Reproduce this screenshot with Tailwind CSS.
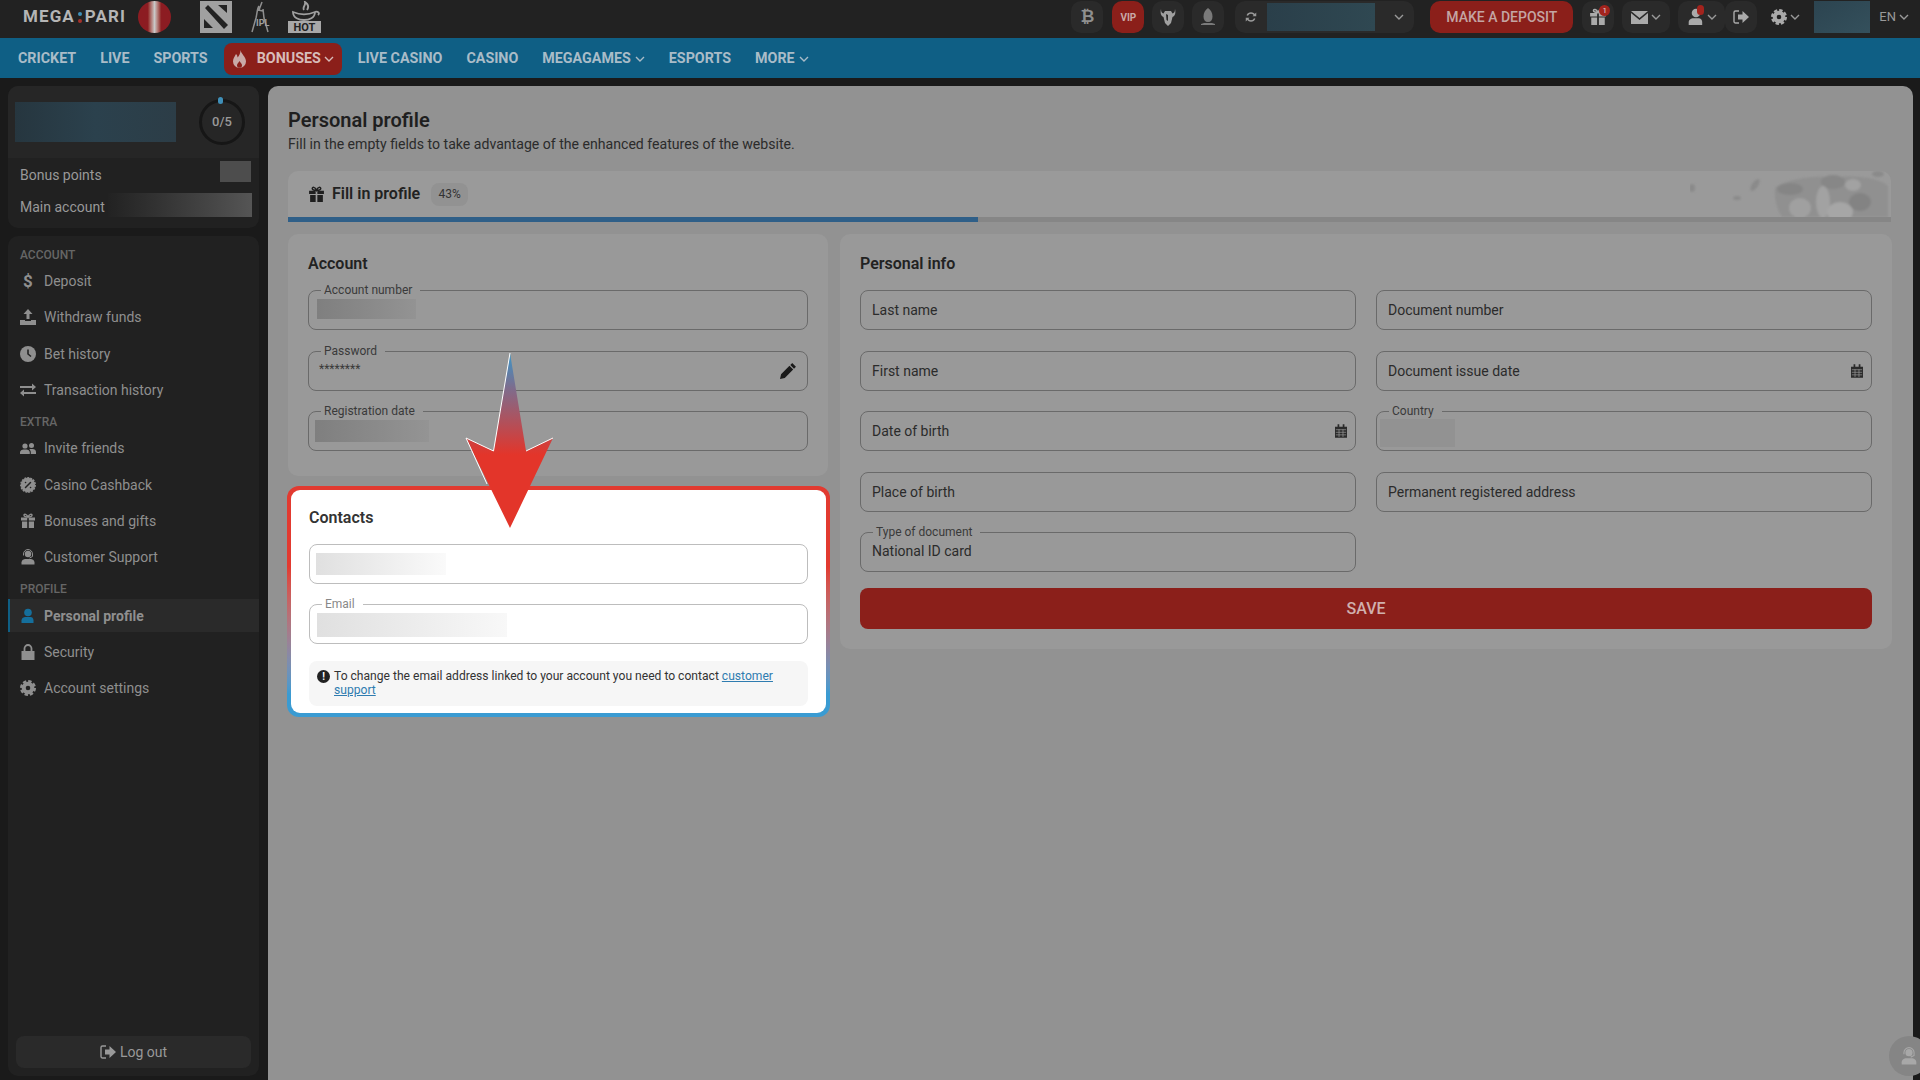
<!DOCTYPE html>
<html lang="en">
  <head>
    <meta charset="UTF-8" />
    <meta name="viewport" content="width=device-width, initial-scale=1.0" />
    <title>Personal profile</title>
    <script src="https://cdn.jsdelivr.net/npm/@tailwindcss/browser@4"></script>
  </head>
  <body class="relative h-[1080px] w-[1920px] overflow-hidden bg-[#1a1a1a] font-['Roboto',sans-serif]">
    <svg class="hidden">
      <symbol id="chev" viewBox="0 0 10 6"><path d="M1 1l4 4 4-4" fill="none" stroke="currentColor" stroke-width="1.4" /></symbol>
      <symbol id="gift" viewBox="0 0 16 16"><path fill="currentColor" d="M1 4.500h6.200v3H1zM8.800 4.500H15v3H8.800zM2 8.500h5.200V15H2zM8.800 8.500H14V15H8.800z" /><path fill="none" stroke="currentColor" stroke-width="1.400" d="M8 4C6 4 4 3.600 4 2.300 4 .8 6.600.6 8 4c1.400-3.400 4-3.200 4-1.700C12 3.600 10 4 8 4z" /></symbol>
      <symbol id="person" viewBox="0 0 16 16"><circle cx="8" cy="4.500" r="3.800" fill="currentColor" /><path fill="currentColor" d="M1.500 15v-2.500C1.500 10 4 9 5.500 9h5c1.500 0 3 1 3 3.500V15z" /></symbol>
      <symbol id="agent" viewBox="0 0 16 16"><circle cx="8" cy="5" r="3.200" fill="currentColor" /><path fill="none" stroke="currentColor" stroke-width="1" d="M3.500 6.500V5a4.500 4.500 0 0 1 9 0v2.500L9.500 9" /><path fill="currentColor" d="M1.500 15.500v-2C1.500 11 4 10 5.500 10h5c1.500 0 4 1 4 3.500v2z" /></symbol>
      <symbol id="friends" viewBox="0 0 16 16"><circle cx="5" cy="6" r="2.600" fill="currentColor" /><circle cx="11.500" cy="5.500" r="2.500" fill="currentColor" /><path fill="currentColor" d="M0 14v-1.500C0 10.500 2 9.500 3.500 9.500h3C8 9.500 9.800 10.500 9.800 12.500V14zM10.800 14v-1.500c0-1.200-.5-2.400-1.500-3.200.5-.2 1-.3 1.500-.3h1.700C14.500 9 16 10 16 12v2z" /></symbol>
      <symbol id="clock" viewBox="0 0 16 16"><circle cx="8" cy="8" r="8" fill="currentColor" /><path d="M8 3.500V8l3 2.500" fill="none" stroke="#222" stroke-width="1.600" /></symbol>
      <symbol id="upload" viewBox="0 0 16 16"><path fill="currentColor" d="M8 0l4.500 5H9.500v5h-3V5H3.500zM0 11h5v1h6v-1h5v5H0z" /></symbol>
      <symbol id="transfer" viewBox="0 0 16 16"><path fill="currentColor" d="M0 4h12V1.500L16 5l-4 3.500V6H0zM16 10H4V7.500L0 11l4 3.500V12h12z" /></symbol>
      <symbol id="cashback" viewBox="0 0 16 16"><circle cx="8" cy="8" r="7.200" fill="currentColor" stroke="currentColor" stroke-width="1.500" stroke-dasharray="2 1" /><path d="M5.500 10.500l5-5M5.500 5.500h.1M10.500 10.500h.1" stroke="#222" stroke-width="1.500" stroke-linecap="round" /></symbol>
      <symbol id="lock" viewBox="0 0 16 16"><path fill="currentColor" d="M1.500 7h13v9h-13z" /><path d="M4.500 7V4.500a3.500 3.500 0 0 1 7 0V7" fill="none" stroke="currentColor" stroke-width="1.800" /></symbol>
      <symbol id="gear" viewBox="0 0 16 16"><circle cx="8" cy="8" r="4.300" fill="none" stroke="currentColor" stroke-width="4" /><circle cx="8" cy="8" r="6.800" fill="none" stroke="currentColor" stroke-width="2.400" stroke-dasharray="3.400 1.940" /></symbol>
      <symbol id="calendar" viewBox="0 0 14 16"><path fill="currentColor" d="M0 3h14v13H0zM3 0h2v4H3zM9 0h2v4H9z" /><path stroke="#999" stroke-width=".8" d="M1 6.500h12M1 9.500h12M1 12.500h12M4.700 6v9M9.300 6v9" /></symbol>
      <symbol id="logout" viewBox="0 0 16 16"><path fill="none" stroke="currentColor" stroke-width="1.400" d="M6 2H2.500A1.500 1.500 0 0 0 1 3.500v9A1.500 1.500 0 0 0 2.500 14H6" /><path fill="currentColor" d="M5 5.500h4.500V2L16 8l-6.500 6v-3.500H5z" /></symbol>
      <symbol id="pencil" viewBox="0 0 16 16"><path fill="currentColor" d="M11.500 1l3.500 3.500-1.800 1.800-3.500-3.500zM8.900 3.600l3.500 3.500L4.500 15 0 16l1-4.500z" /></symbol>
    </svg>

    <!-- top bar -->
    <header class="flex h-[38px] items-start bg-[#222] pt-px">
      <div class="ml-[23px] flex h-8 w-[103px] items-center text-[17px] font-bold tracking-[1.1px] whitespace-nowrap text-[#b5b5b5]">
        MEGA
        <span class="mx-[3px] flex flex-col gap-[3px]">
          <span class="h-[4px] w-[4px] rounded-full bg-[#3f8fb8]"></span>
          <span class="h-[4px] w-[4px] rounded-full bg-[#a3312b]"></span>
        </span>
        PARI
      </div>
      <div class="ml-[12px] h-8 w-[33px] rounded-[50%] bg-linear-to-r from-[#8c1c22] from-30% via-[#c8c8c8] via-50% to-[#8c1c22] to-70%"></div>
      <svg class="ml-[29px] h-8 w-8" viewBox="0 0 32 32">
        <rect width="32" height="32" fill="#a0a0a0" />
        <path fill="#222" d="M5 7l3-3 20 20-4 4zM18 4h9v8zM4 18l9 9H4z" />
      </svg>
      <svg class="ml-[18px] h-8 w-5" viewBox="0 0 20 32">
        <path fill="none" stroke="#8f8f8f" stroke-width="1.500" d="M12 1L9 9M9 5c-2 3-2 8-3 12L2 31M13 8l1 9 4 14M8 9l5 1" />
        <text x="6" y="25" font-size="9" font-weight="700" fill="#a0a0a0">IPL</text>
      </svg>
      <svg class="ml-[18px] h-8 w-[33px]" viewBox="0 0 33 32">
        <path fill="none" stroke="#a0a0a0" stroke-width="1.800" d="M5 11c0 6 6 8 11 8s11-2 11-8c-7 3-15 3-22 0zM27 11c3-1 5 1 3 3M16 9c-2-3 2-4 1-8 3 2 4 5 2 8" />
        <rect y="20" width="33" height="12" fill="#a8a8a8" />
        <text x="16.500" y="30" text-anchor="middle" font-size="11" font-weight="700" fill="#222">HOT</text>
      </svg>

      <div class="ml-auto flex items-start pr-[6px]">
        <div class="flex h-8 w-8 items-center justify-center rounded-[10px] bg-[#2a2a2a] text-[17px] font-bold text-[#8f8f8f]">₿</div>
        <div class="ml-[9px] flex h-8 w-8 items-center justify-center rounded-[10px] bg-[#8b1f1a] text-[10px] font-bold text-[#c9a9a7]">VIP</div>
        <div class="ml-2 flex h-8 w-8 items-center justify-center rounded-[10px] bg-[#2a2a2a]">
          <svg class="h-[18px] w-[16px] text-[#a0a0a0]" viewBox="0 0 16 18"><path fill="currentColor" d="M1 1c0 3 1 4 2.500 4.500L5 3h6l1.500 2.500C14 5 15 4 15 1c1 4 0 7-2.500 8L11 15l-3 3-3-3-1.500-6C1 8 0 5 1 1z" /><path fill="#2a2a2a" d="M6 6l2 1v6L6.500 12z" /></svg>
        </div>
        <div class="ml-2 flex h-8 w-8 items-center justify-center rounded-[10px] bg-[#2a2a2a]">
          <svg class="h-[18px] w-[16px] text-[#7a7a7a]" viewBox="0 0 16 18"><path fill="currentColor" d="M8 0c3 2 4.500 5 4.500 8.500S11 14 8 14s-4.500-2-4.500-5.500S5 2 8 0zM1 16l3-1h8l3 1v1H1z" /></svg>
        </div>
        <div class="ml-[11px] flex h-8 w-[179px] items-center rounded-[10px] bg-[#2a2a2a]">
          <svg class="ml-[10px] h-[12px] w-[12px] text-[#999]" viewBox="0 0 16 16"><path fill="none" stroke="currentColor" stroke-width="2" d="M13 6A5.500 5.500 0 0 0 3 6M3 10a5.500 5.500 0 0 0 10 0" /><path fill="currentColor" d="M15 2v5h-5zM1 14V9h5z" /></svg>
          <div class="ml-[10px] h-[28px] w-[108px] bg-linear-to-r from-[#2a3f4a] to-[#2f4852]"></div>
          <svg class="ml-[19px] h-[6px] w-[10px] text-[#999]"><use href="#chev" /></svg>
        </div>
        <div class="ml-4 flex h-8 w-[143px] items-center justify-center rounded-[10px] bg-[#8b1f1a] text-[14px] font-medium text-[#c4a5a3]">MAKE A DEPOSIT</div>
        <div class="relative ml-[9px] flex h-8 w-8 items-center justify-center rounded-[10px] bg-[#2a2a2a]">
          <svg class="h-[18px] w-[18px] text-[#aaa]"><use href="#gift" /></svg>
          <span class="absolute top-[4px] right-[4px] flex h-[11px] w-[11px] items-center justify-center rounded-full bg-[#a3231d] text-[8px] text-[#ddd]">1</span>
        </div>
        <div class="ml-2 flex h-8 w-[48px] items-center justify-center gap-[3px] rounded-[10px] bg-[#2a2a2a]">
          <svg class="h-[13px] w-[17px] text-[#aaa]" viewBox="0 0 17 13"><path fill="currentColor" d="M0 0h17L8.500 7zM0 2l8.500 7L17 2v11H0z" /></svg>
          <svg class="h-[6px] w-[10px] text-[#999]"><use href="#chev" /></svg>
        </div>
        <div class="relative ml-2 flex h-8 w-[47px] items-center justify-center gap-[2px] rounded-[10px] bg-[#2a2a2a]">
          <svg class="h-[18px] w-[18px] text-[#aaa]"><use href="#person" /></svg>
          <svg class="h-[6px] w-[10px] text-[#999]"><use href="#chev" /></svg>
          <span class="absolute top-[4px] left-[19px] h-[10px] w-[7px] rounded-full bg-[#a3231d]"></span>
        </div>
        <div class="flex h-8 w-8 items-center justify-center rounded-[10px] bg-[#2a2a2a]">
          <svg class="h-4 w-4 text-[#aaa]"><use href="#logout" /></svg>
        </div>
        <div class="ml-2 flex h-8 w-[40px] items-center justify-center gap-[3px]">
          <svg class="h-[16px] w-[16px] text-[#aaa]"><use href="#gear" /></svg>
          <svg class="h-[6px] w-[10px] text-[#999]"><use href="#chev" /></svg>
        </div>
        <div class="ml-[9px] h-8 w-[56px] bg-linear-to-br from-[#2c4450] to-[#34505c]"></div>
        <div class="ml-[9px] flex h-8 items-center gap-[3px] pr-[5px] text-[13px] text-[#999]">
          EN
          <svg class="h-[6px] w-[10px] text-[#999]"><use href="#chev" /></svg>
        </div>
      </div>
    </header>

    <!-- main nav -->
    <nav class="flex h-10 items-center gap-6 bg-[#0f5f85] pt-px pl-[18px] text-[14.300px] font-bold text-[#a9bcc8]">
      <span>CRICKET</span>
      <span>LIVE</span>
      <span>SPORTS</span>
      <span class="-mx-2 flex h-8 w-[118px] items-center rounded-lg bg-[#8b1f1a] pl-2 text-[#d8bcba]">
        <svg class="h-[18px] w-[15px] text-[#c9aaa8]" viewBox="0 0 15 18"><path fill="currentColor" d="M8.500 0c.5 4 5.500 6.500 5.500 11.500A6.500 6.500 0 0 1 7.500 18 6.500 6.500 0 0 1 1 11.500c0-3 1.500-4.500 3-7.500 1 1 1.500 2 1.500 3.500C7 6 8.500 3.500 8.500 0zM7.500 11c-1 2-2.500 2.800-2.500 4.200a2.500 2.500 0 0 0 5 0c0-1.400-1.500-2.200-2.500-4.200z" fill-rule="evenodd" /></svg>
        <span class="ml-[10px]">BONUSES</span>
        <svg class="ml-[3px] h-[6px] w-[10px]"><use href="#chev" /></svg>
      </span>
      <span>LIVE CASINO</span>
      <span>CASINO</span>
      <span class="flex items-center gap-[4px]">MEGAGAMES<svg class="h-[6px] w-[10px]"><use href="#chev" /></svg></span>
      <span>ESPORTS</span>
      <span class="flex items-center gap-[4px]">MORE<svg class="h-[6px] w-[10px]"><use href="#chev" /></svg></span>
    </nav>

    <div class="flex h-[1002px] pt-2 pl-2">
      <!-- sidebar -->
      <aside class="flex h-[990px] w-[251px] flex-col">
        <div class="h-[142px] overflow-hidden rounded-[10px] bg-[#212121]">
          <div class="flex h-[72px] items-center bg-[#262626] pl-[7px]">
            <div class="h-10 w-[161px] bg-linear-to-r from-[#26363f] via-[#2b414d] to-[#2c3d47]"></div>
            <div class="relative ml-[23px] flex h-[46px] w-[46px] items-center justify-center rounded-full border-[3px] border-[#161616] text-[13px] font-medium text-[#999]">
              0/5
              <span class="absolute -top-[5px] left-[16px] h-[7px] w-[5px] rounded-full bg-[#3f8fb8]"></span>
            </div>
          </div>
          <div class="relative flex h-[33px] items-center pl-[12px] text-sm text-[#999]">
            Bonus points
            <span class="absolute top-[3px] right-[8px] h-[21px] w-[31px] bg-[#4d4d4d]"></span>
          </div>
          <div class="relative flex h-[31px] items-center pl-[12px] text-sm text-[#999]">
            Main account
            <span class="absolute top-[2px] right-[7px] h-6 w-[144px] bg-linear-to-r from-[#222] to-[#555]"></span>
          </div>
        </div>

        <div class="mt-2 flex flex-1 flex-col rounded-[10px] bg-[#212121] pt-[5px] pb-2 text-sm text-[#8f8f8f]">
          <div class="h-[22px] pt-[6px] pl-3 text-xs leading-4 font-medium text-[#666]">ACCOUNT</div>
          <a class="flex h-[36.300px] items-center pl-3"><span class="w-4 text-center text-[17px] font-bold">$</span><span class="ml-2">Deposit</span></a>
          <a class="flex h-[36.300px] items-center pl-3"><svg class="h-4 w-4"><use href="#upload" /></svg><span class="ml-2">Withdraw funds</span></a>
          <a class="flex h-[36.300px] items-center pl-3"><svg class="h-4 w-4"><use href="#clock" /></svg><span class="ml-2">Bet history</span></a>
          <a class="flex h-[36.300px] items-center pl-3"><svg class="h-4 w-4"><use href="#transfer" /></svg><span class="ml-2">Transaction history</span></a>
          <div class="h-[22px] pt-[6px] pl-3 text-xs leading-4 font-medium text-[#666]">EXTRA</div>
          <a class="flex h-[36.300px] items-center pl-3"><svg class="h-4 w-4"><use href="#friends" /></svg><span class="ml-2">Invite friends</span></a>
          <a class="flex h-[36.300px] items-center pl-3"><svg class="h-4 w-4"><use href="#cashback" /></svg><span class="ml-2">Casino Cashback</span></a>
          <a class="flex h-[36.300px] items-center pl-3"><svg class="h-4 w-4"><use href="#gift" /></svg><span class="ml-2">Bonuses and gifts</span></a>
          <a class="flex h-[36.300px] items-center pl-3"><svg class="h-4 w-4"><use href="#agent" /></svg><span class="ml-2">Customer Support</span></a>
          <div class="h-[22px] pt-[6px] pl-3 text-xs leading-4 font-medium text-[#666]">PROFILE</div>
          <a class="my-[1.650px] flex h-[33px] items-center border-l-2 border-[#0f5f85] bg-[#2a2a2a] pl-[10px] font-bold"><svg class="h-4 w-4 text-[#156f9c]"><use href="#person" /></svg><span class="ml-2">Personal profile</span></a>
          <a class="flex h-[36.300px] items-center pl-3"><svg class="h-4 w-4"><use href="#lock" /></svg><span class="ml-2">Security</span></a>
          <a class="flex h-[36.300px] items-center pl-3"><svg class="h-4 w-4"><use href="#gear" /></svg><span class="ml-2">Account settings</span></a>
          <button class="mx-2 mt-auto flex h-8 items-center justify-center gap-1 rounded-lg bg-[#2a2a2a] text-[#999]">
            <svg class="h-4 w-4"><use href="#logout" /></svg>
            Log out
          </button>
        </div>
      </aside>

      <!-- content -->
      <main class="relative ml-[9px] h-[994px] w-[1645px] rounded-t-[10px] bg-[#929292] px-5 pt-5 text-[#222]">
        <h1 class="text-xl leading-7 font-semibold text-[#1f1f1f]">Personal profile</h1>
        <p class="text-[14.100px] leading-5 text-[#2b2b2b]">Fill in the empty fields to take advantage of the enhanced features of the website.</p>

        <div class="relative mt-[17px] h-[51px] w-[1603px] overflow-hidden rounded-t-[10px] bg-[#9a9a9a]">
          <div class="flex h-[46px] items-center pl-5">
            <svg class="h-[17px] w-[17px] text-[#1f1f1f]"><use href="#gift" /></svg>
            <span class="ml-[7px] text-base font-semibold">Fill in profile</span>
            <span class="ml-[11px] flex h-[23px] w-[37px] items-center justify-center rounded-lg bg-[#929292] text-xs text-[#333]">43%</span>
          </div>
          <div class="h-[5px] bg-[#868686]"><div class="h-[5px] w-[690px] bg-[#2f5f88]"></div></div>
          <svg class="absolute top-0 right-0 h-[46px] w-[201px]" viewBox="0 0 201 46">
            <defs><filter id="soft"><feGaussianBlur stdDeviation="1" /></filter></defs>
            <g filter="url(#soft)">
              <g fill="#8a8a8a">
                <ellipse cx="2" cy="17" rx="3" ry="4" />
                <ellipse cx="47" cy="27" rx="4" ry="2" />
                <ellipse cx="65" cy="14" rx="3" ry="7" transform="rotate(35 65 14)" />
                <ellipse cx="188" cy="3" rx="6" ry="3" />
              </g>
              <path fill="#909090" d="M85 17c10-8 40-14 58-10 20-4 48 0 55 8v31H92c-6-10-8-20-7-29z" />
              <ellipse cx="143" cy="11" rx="12" ry="7" fill="#878787" />
              <ellipse cx="100" cy="18" rx="13" ry="6" fill="#858585" />
              <ellipse cx="163" cy="14" rx="8" ry="6" fill="#a2a2a2" />
              <ellipse cx="170" cy="31" rx="11" ry="9" fill="#838383" />
              <ellipse cx="110" cy="37" rx="11" ry="10" fill="#a0a0a0" />
              <ellipse cx="133" cy="31" rx="7" ry="16" fill="#a2a2a2" />
              <ellipse cx="150" cy="41" rx="13" ry="10" fill="#a6a6a6" />
            </g>
          </svg>
        </div>

        <div class="mt-3 flex items-start gap-3">
          <div class="w-[540px]">
            <section class="h-[242px] rounded-[10px] bg-[#999] px-5 pt-[20px]">
              <h2 class="text-base leading-5 font-semibold">Account</h2>
              <div class="mt-[16px] flex flex-col gap-[20.600px]">
                <div class="relative h-10 rounded-lg border-[1.500px] border-[#6a6a6a]">
                  <span class="absolute -top-[9px] left-[12px] bg-[#999] px-[3px] pr-2 text-xs leading-4 text-[#3a3a3a]">Account number</span>
                  <div class="mt-[8px] ml-[8px] h-5 w-[99px] bg-linear-to-r from-[#7f7f7f] to-[#939393]"></div>
                </div>
                <div class="relative h-10 rounded-lg border-[1.500px] border-[#6a6a6a]">
                  <span class="absolute -top-[9px] left-[12px] bg-[#999] px-[3px] pr-2 text-xs leading-4 text-[#3a3a3a]">Password</span>
                  <div class="mt-[9px] ml-[10px] text-xs leading-4 text-[#3a3a3a]">********</div>
                  <svg class="absolute top-[10px] right-[10px] h-[17px] w-[17px] text-[#1a1a1a]"><use href="#pencil" /></svg>
                </div>
                <div class="relative h-10 rounded-lg border-[1.500px] border-[#6a6a6a]">
                  <span class="absolute -top-[9px] left-[12px] bg-[#999] px-[3px] pr-2 text-xs leading-4 text-[#3a3a3a]">Registration date</span>
                  <div class="mt-[8px] ml-[6px] h-[22px] w-[114px] bg-linear-to-r from-[#7f7f7f] to-[#949494]"></div>
                </div>
              </div>
            </section>

            <section class="mt-[10px] -ml-px h-[231px] w-[543px] rounded-[12px] bg-linear-to-b from-[#e23a30] from-35% to-[#3a9bd2] to-90% p-[4px]">
              <div class="h-full rounded-[9px] bg-white px-[18px] pt-[18px]">
                <h2 class="text-base leading-5 font-semibold text-[#333]">Contacts</h2>
                <div class="mt-[16px] h-10 rounded-lg border-[1.500px] border-[#bdbdbd]">
                  <div class="mt-[8px] ml-[6px] h-[22px] w-[130px] bg-linear-to-r from-[#e0e0e0] to-[#fafafa]"></div>
                </div>
                <div class="relative mt-5 h-10 rounded-lg border-[1.500px] border-[#bdbdbd]">
                  <span class="absolute -top-[9px] left-[12px] bg-white px-[3px] pr-2 text-xs leading-4 text-[#888]">Email</span>
                  <div class="mt-[8px] ml-[7px] h-6 w-[190px] bg-linear-to-r from-[#e0e0e0] to-[#f8f8f8]"></div>
                </div>
                <div class="mt-[17px] flex h-[45px] rounded-lg bg-[#f6f6f6] pt-[8px] pl-[8px] pr-[30px] text-[12.100px] leading-[14px] text-[#333]">
                  <span class="mt-px mr-[4px] flex h-[13px] w-[13px] shrink-0 items-center justify-center rounded-full bg-[#222] text-[10px] font-bold text-white">!</span>
                  <p>To change the email address linked to your account you need to contact <a class="text-[#2f7cb0] underline">customer</a> <a class="text-[#2f7cb0] underline">support</a></p>
                </div>
              </div>
            </section>
          </div>

          <section class="h-[415px] w-[1052px] rounded-[10px] bg-[#999] px-5 pt-[20px]">
            <h2 class="text-base leading-5 font-semibold">Personal info</h2>
            <div class="mt-[16px] grid grid-cols-2 gap-x-5 gap-y-[20.600px]">
              <div class="flex h-10 items-center rounded-lg border-[1.500px] border-[#6a6a6a] pl-[11px] text-sm text-[#2b2b2b]">Last name</div>
              <div class="flex h-10 items-center rounded-lg border-[1.500px] border-[#6a6a6a] pl-[11px] text-sm text-[#2b2b2b]">Document number</div>
              <div class="flex h-10 items-center rounded-lg border-[1.500px] border-[#6a6a6a] pl-[11px] text-sm text-[#2b2b2b]">First name</div>
              <div class="flex h-10 items-center justify-between rounded-lg border-[1.500px] border-[#6a6a6a] pr-2 pl-[11px] text-sm text-[#2b2b2b]">Document issue date<svg class="h-[14px] w-3 text-[#2b2b2b]"><use href="#calendar" /></svg></div>
              <div class="flex h-10 items-center justify-between rounded-lg border-[1.500px] border-[#6a6a6a] pr-2 pl-[11px] text-sm text-[#2b2b2b]">Date of birth<svg class="h-[14px] w-3 text-[#2b2b2b]"><use href="#calendar" /></svg></div>
              <div class="relative h-10 rounded-lg border-[1.500px] border-[#6a6a6a]">
                <span class="absolute -top-[9px] left-[12px] bg-[#999] px-[3px] pr-2 text-xs leading-4 text-[#3a3a3a]">Country</span>
                <div class="mt-[7px] ml-[3px] h-[28px] w-[75px] bg-[#929292]"></div>
              </div>
              <div class="flex h-10 items-center rounded-lg border-[1.500px] border-[#6a6a6a] pl-[11px] text-sm text-[#2b2b2b]">Place of birth</div>
              <div class="flex h-10 items-center rounded-lg border-[1.500px] border-[#6a6a6a] pl-[11px] text-sm text-[#2b2b2b]">Permanent registered address</div>
              <div class="relative h-10 rounded-lg border-[1.500px] border-[#6a6a6a] pt-[8px] pl-[11px] text-sm leading-5 text-[#2b2b2b]">
                <span class="absolute -top-[9px] left-[12px] bg-[#999] px-[3px] pr-2 text-xs leading-4 text-[#3a3a3a]">Type of document</span>
                National ID card
              </div>
            </div>
            <button class="mt-4 h-[41px] w-full rounded-lg bg-[#8b1f1a] text-base font-medium text-[#d0b0ae]">SAVE</button>
          </section>
        </div>

        <!-- arrow over the cards -->
        <svg class="absolute top-[264px] left-[192px] h-[180px] w-[100px]" viewBox="0 0 100 180">
          <defs>
            <linearGradient id="arrow" gradientUnits="userSpaceOnUse" x1="0" y1="3" x2="0" y2="105">
              <stop offset="0" stop-color="#3a96c8" />
              <stop offset=".35" stop-color="#7f6c8c" />
              <stop offset="1" stop-color="#e3352a" />
            </linearGradient>
          </defs>
          <polygon fill="url(#arrow)" points="50,3 66,101 93,88 50,178 6,88 33.500,101" />
          <path fill="none" stroke="#fff" stroke-width="1" d="M50 3L33.500 101 6 88 27 134M66 101L93 88" />
        </svg>
      </main>
    </div>

    <!-- support bubble -->
    <div class="absolute top-[1036px] left-[1889px] flex h-10 w-10 items-center justify-center rounded-full bg-[#858585]">
      <svg class="h-[18px] w-[18px] text-[#a8a8a8]"><use href="#agent" /></svg>
    </div>
  </body>
</html>
